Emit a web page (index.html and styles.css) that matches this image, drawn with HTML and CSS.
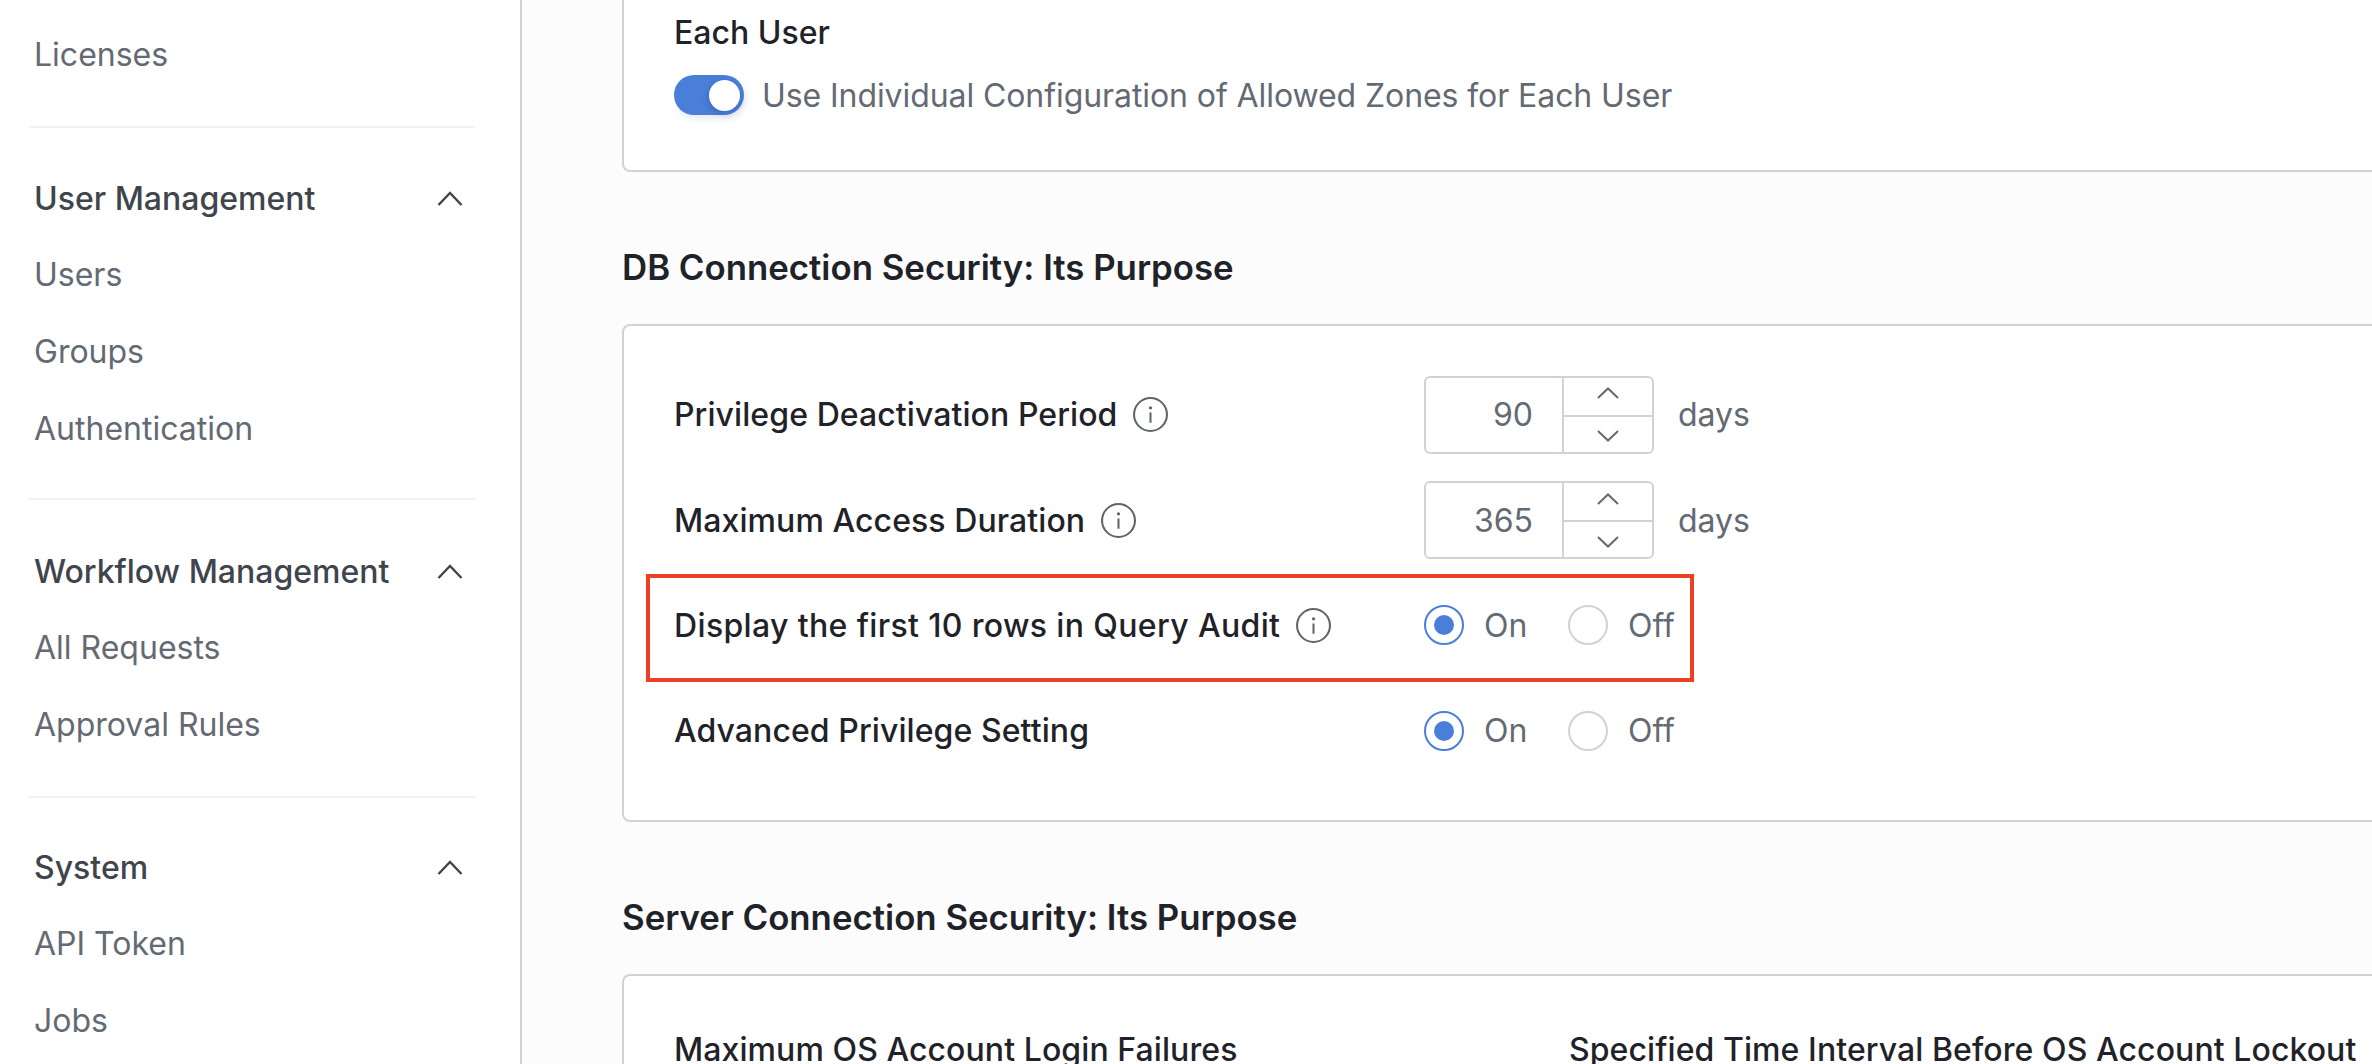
FILE: index.html
```html
<!DOCTYPE html>
<html lang="en">
<head>
<meta charset="utf-8">
<title>Settings</title>
<link rel="stylesheet" href="styles.css">
</head>
<body>
<div class="app">
  <nav class="sidebar">
    <div class="group first">
      <a class="item">Licenses</a>
    </div>
    <div class="group">
      <div class="group-head"><span>User Management</span><svg class="chev" viewBox="0 0 26 15"><path d="M1.5 14 L13 2 L24.5 14"/></svg></div>
      <a class="item">Users</a>
      <a class="item">Groups</a>
      <a class="item">Authentication</a>
    </div>
    <div class="group workflow">
      <div class="group-head"><span>Workflow Management</span><svg class="chev" viewBox="0 0 26 15"><path d="M1.5 14 L13 2 L24.5 14"/></svg></div>
      <a class="item">All Requests</a>
      <a class="item">Approval Rules</a>
    </div>
    <div class="group last">
      <div class="group-head"><span>System</span><svg class="chev" viewBox="0 0 26 15"><path d="M1.5 14 L13 2 L24.5 14"/></svg></div>
      <a class="item">API Token</a>
      <a class="item">Jobs</a>
    </div>
  </nav>
  <main class="main">
    <section class="card card-zones">
      <div class="field-title">Each User</div>
      <div class="switch-line">
        <span class="switch"><span class="knob"></span></span>
        <span class="switch-text">Use Individual Configuration of Allowed Zones for Each User</span>
      </div>
    </section>
    <h2 class="section-title">DB Connection Security: Its Purpose</h2>
    <section class="card card-db">
      <div class="row">
        <div class="label"><span>Privilege Deactivation Period</span><svg class="info" viewBox="0 0 34 34"><circle cx="17" cy="17" r="16"/><circle class="dot" cx="17" cy="10.5" r="1.6"/><path d="M17 15v10"/></svg></div>
        <div class="stepper"><div class="value">90</div><div class="arrows"><span class="arrow up"><svg viewBox="0 0 22 12"><path d="M1 11 L11 1.5 L21 11"/></svg></span><span class="arrow down"><svg viewBox="0 0 22 12"><path d="M1 1 L11 10.5 L21 1"/></svg></span></div></div>
        <span class="unit">days</span>
      </div>
      <div class="row">
        <div class="label"><span>Maximum Access Duration</span><svg class="info" viewBox="0 0 34 34"><circle cx="17" cy="17" r="16"/><circle class="dot" cx="17" cy="10.5" r="1.6"/><path d="M17 15v10"/></svg></div>
        <div class="stepper"><div class="value">365</div><div class="arrows"><span class="arrow up"><svg viewBox="0 0 22 12"><path d="M1 11 L11 1.5 L21 11"/></svg></span><span class="arrow down"><svg viewBox="0 0 22 12"><path d="M1 1 L11 10.5 L21 1"/></svg></span></div></div>
        <span class="unit">days</span>
      </div>
      <div class="row">
        <div class="label"><span class="wide">Display the first 10 rows in Query Audit</span><svg class="info" viewBox="0 0 34 34"><circle cx="17" cy="17" r="16"/><circle class="dot" cx="17" cy="10.5" r="1.6"/><path d="M17 15v10"/></svg></div>
        <div class="radios">
          <span class="radio on"></span><span class="radio-text">On</span>
          <span class="radio"></span><span class="radio-text">Off</span>
        </div>
        <div class="highlight"></div>
      </div>
      <div class="row">
        <div class="label"><span>Advanced Privilege Setting</span></div>
        <div class="radios">
          <span class="radio on"></span><span class="radio-text">On</span>
          <span class="radio"></span><span class="radio-text">Off</span>
        </div>
      </div>
    </section>
    <h2 class="section-title">Server Connection Security: Its Purpose</h2>
    <section class="card card-server">
      <div class="server-row">
        <div class="server-col">Maximum OS Account Login Failures</div>
        <div class="server-col">Specified Time Interval Before OS Account Lockout</div>
      </div>
    </section>
  </main>
</div>
</body>
</html>
```
FILE: styles.css
```css
* { box-sizing: border-box; }
html, body { margin: 0; height: 100%; overflow: hidden; }
body { font-family: Inter, "Liberation Sans", sans-serif; font-size: 32px; background: #fcfcfc; }
.app { display: flex; height: 1064px; overflow: hidden; }

.sidebar { width: 522px; flex: none; background: #fff; border-right: 2px solid #d2d1d7; padding: 16px 45px 0 29px; display: flex; flex-direction: column; }
.group { border-bottom: 2px solid #f1f1f3; padding: 32px 0 31px; }
.group.first { padding: 0 0 33px; }
.group.workflow { padding: 33px 0 33px; }
.group.last { border-bottom: 0; padding-top: 31px; }
.group-head { height: 76px; display: flex; align-items: center; justify-content: space-between; padding: 0 12px 0 5px; font-weight: 500; color: #3f454c; }
.chev { width: 26px; height: 15px; }
.chev path { fill: none; stroke: #3f454c; stroke-width: 2.4; }
.item { display: flex; align-items: center; height: 77px; padding-left: 5px; color: #646a73; }

.main { flex: 1; min-width: 0; padding: 0 0 0 100px; }
.card { background: #fff; border: 2px solid #d2d1d7; border-radius: 8px; width: 1780px; }
.card-zones { margin-top: -60px; height: 232px; padding: 73px 50px 0; }
.field-title { font-weight: 500; color: #1f2329; line-height: 36px; }
.switch-line { display: flex; align-items: center; gap: 18px; margin-top: 24px; color: #646a73; }
.switch-text { letter-spacing: -0.08px; }
.switch { width: 70px; height: 40px; border-radius: 20px; background: #4a7fd9; display: block; position: relative; box-shadow: 2px 4px 6px rgba(60,80,130,.12); flex: none; }
.knob { position: absolute; right: 4px; top: 4.5px; width: 31px; height: 31px; border-radius: 50%; background: #fff; box-shadow: -1px 2px 6px rgba(30,50,110,.3); }
.section-title { font-size: 34.8px; font-weight: 600; color: #1f2329; margin: 0; height: 152px; padding-top: 38px; display: flex; align-items: center; }
.card-db { height: 498px; padding: 36px 50px 0; position: relative; }
.row { height: 105.4px; display: flex; align-items: center; position: relative; }
.label { width: 750px; flex: none; display: flex; align-items: center; gap: 16px; font-weight: 500; color: #1f2329; letter-spacing: 0.08px; }
.label .wide { letter-spacing: 0.36px; }
.info { width: 35px; height: 35px; flex: none; }
.info circle { fill: none; stroke: #5f656d; stroke-width: 2; }
.info .dot { fill: #5f656d; stroke: none; }
.info path { fill: none; stroke: #5f656d; stroke-width: 2; }
.stepper { width: 230px; height: 78px; border: 2px solid #d2d1d7; border-radius: 6px; display: flex; background: #fff; }
.value { flex: 1; display: flex; align-items: center; justify-content: flex-end; padding-right: 29px; color: #646a73; }
.arrows { width: 90px; border-left: 2px solid #d2d1d7; display: flex; flex-direction: column; }
.arrow { flex: 1; display: flex; align-items: center; justify-content: center; }
.arrow.up { padding-bottom: 6px; }
.arrow.down { padding-top: 4px; border-top: 2px solid #d2d1d7; }
.arrow svg { width: 22px; height: 12px; }
.arrow path { fill: none; stroke: #646a73; stroke-width: 2; }
.unit { margin-left: 24px; color: #646a73; }
.radios { display: flex; align-items: center; color: #646a73; }
.radio { width: 40px; height: 40px; border-radius: 50%; border: 2px solid #d2d1d7; display: block; position: relative; background: #fff; }
.radio.on { border-color: #4a7fd9; }
.radio.on::after { content: ""; position: absolute; left: 8px; top: 8px; width: 20px; height: 20px; border-radius: 50%; background: #4a7fd9; }
.radio-text { margin-left: 20px; width: 84px; }
.radio-text:last-child { width: auto; }
.highlight { position: absolute; left: -28px; top: 1px; width: 1048px; height: 108px; border: 4px solid #ec4026; }
.card-server { height: 300px; padding: 54px 50px 0; }
.server-row { display: flex; font-weight: 500; color: #1f2329; letter-spacing: 0.08px; }
.server-col { width: 895px; flex: none; }
```
